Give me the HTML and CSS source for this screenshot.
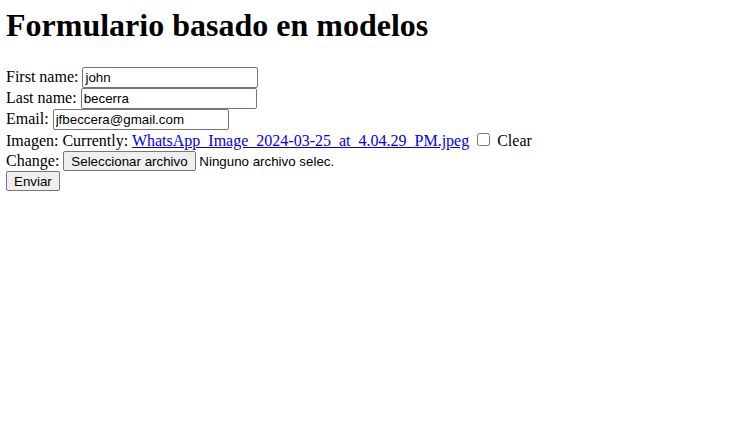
FILE: index.html
```html
<!DOCTYPE html>
<html lang="es">
<head>
<meta charset="utf-8">
<title>Formulario basado en modelos</title>
<link rel="stylesheet" href="styles.css">
</head>
<body>
<h1 class="title">Formulario basado en modelos</h1>
<form class="form">
<label class="lbl">First name:</label> <input class="field" type="text" value="john"><br>
<label class="lbl">Last name:</label> <input class="field" type="text" value="becerra"><br>
<label class="lbl">Email:</label> <input class="field" type="text" value="jfbeccera@gmail.com"><br>
<label class="lbl">Imagen:</label> Currently: <a class="link" href="#">WhatsApp_Image_2024-03-25_at_4.04.29_PM.jpeg</a> <input class="check" type="checkbox"> <label class="lbl">Clear</label><br>
Change: <button class="btn" type="button">Seleccionar archivo</button><span class="nofile"> Ninguno archivo selec.</span><br>
<button class="btn" type="button">Enviar</button>
</form>
</body>
</html>
```
FILE: styles.css
```css
body {
  margin: 0 6px;
  font-family: "Liberation Serif", "Times New Roman", serif;
  font-size: 16px;
  color: #000;
  background: #fff;
}
.title {
  font-size: 32px;
  font-weight: bold;
  margin: 7px 0 23px;
}
.form {
  margin: 0;
}
.field {
  font-family: "Liberation Sans", Arial, sans-serif;
  font-size: 13.33px;
  width: 176px;
  box-sizing: border-box;
  height: 21px;
  padding: 1px 2px;
  border: 1px solid #767676;
  border-radius: 2px;
  margin: 0;
}
.link {
  color: #0000ee;
}
.check {
  margin: 3px 3px 5px 4px;
}
.btn {
  font-family: "Liberation Sans", Arial, sans-serif;
  font-size: 13.33px;
  box-sizing: border-box;
  height: 20px;
  padding: 0 7px;
  border: 1px solid #767676;
  border-radius: 2px;
  background: #efefef;
  margin: 0;
}
.nofile {
  font-family: "Liberation Sans", Arial, sans-serif;
  font-size: 13.33px;
}
```
